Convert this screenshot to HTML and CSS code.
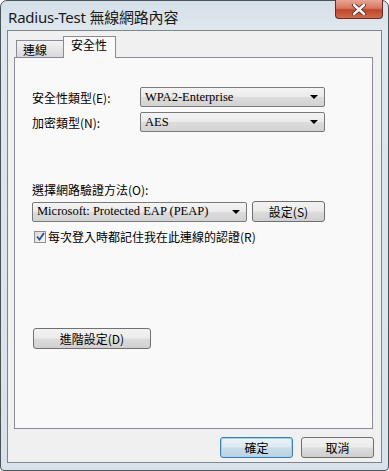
FILE: index.html
```html
<!DOCTYPE html>
<html lang="zh-Hant">
<head>
  <meta charset="UTF-8">
  <title>Radius-Test 無線網路內容</title>
  <link rel="stylesheet" href="styles.css">
</head>
<body>
  <div class="window">
    <div class="titlebar">
      <span class="title">Radius-Test 無線網路內容</span>
      <div class="close-btn">
        <svg width="16" height="11" viewBox="0 0 16 11">
          <path d="M3 1 L13 10 M13 1 L3 10" stroke="#5a2a20" stroke-width="4.2" stroke-linecap="round"/>
          <path d="M3 1 L13 10 M13 1 L3 10" stroke="#fff" stroke-width="2.4" stroke-linecap="round"/>
        </svg>
      </div>
    </div>

    <div class="client">
      <div class="tabs">
        <div class="tab">連線</div>
        <div class="tab active">安全性</div>
      </div>

      <div class="panel">
        <div class="row first">
          <span class="label">安全性類型(E):</span>
          <div class="combo wide"><span>WPA2-Enterprise</span><i class="arrow"></i></div>
        </div>
        <div class="row">
          <span class="label">加密類型(N):</span>
          <div class="combo wide"><span>AES</span><i class="arrow"></i></div>
        </div>

        <div class="method-label">選擇網路驗證方法(O):</div>
        <div class="method-row">
          <div class="combo method"><span>Microsoft: Protected EAP (PEAP)</span><i class="arrow"></i></div>
          <div class="btn settings">設定(S)</div>
        </div>
        <div class="check-row">
          <span class="checkbox">
            <svg width="9" height="9" viewBox="0 0 9 9">
              <path d="M1 4.5 L3.5 7.5 L8 1" fill="none" stroke="#2b4f9e" stroke-width="1.8"/>
            </svg>
          </span>
          <span>每次登入時都記住我在此連線的認證(R)</span>
        </div>

        <div class="btn advanced">進階設定(D)</div>
      </div>

      <div class="footer">
        <div class="btn default">確定</div>
        <div class="btn">取消</div>
      </div>
    </div>
  </div>
</body>
</html>
```

FILE: styles.css
```css
body {
  margin: 0;
  background: #fff;
}

.window {
  width: 387px;
  height: 469px;
  border: 1px solid #4a525a;
  border-radius: 7px 7px 4px 4px;
  background: linear-gradient(to bottom, #d6e0e9 0px, #dfe7ee 30px, #d9e2ea 100%);
  display: flex;
  flex-direction: column;
  font-family: "Liberation Serif", "Noto Sans CJK TC", serif;
  font-size: 12px;
  color: #000;
}

.titlebar {
  height: 29px;
  display: flex;
  align-items: flex-start;
  position: relative;
}

.title {
  font-family: "Noto Sans", "Noto Sans CJK TC", sans-serif;
  font-size: 15px;
  color: #1a1a1a;
  margin: 5px 0 0 7px;
  letter-spacing: -0.2px;
}

.close-btn {
  position: absolute;
  right: 5px;
  top: -1px;
  width: 46px;
  height: 18px;
  border: 1px solid #6a2a20;
  border-top: none;
  border-radius: 0 0 4px 4px;
  background: linear-gradient(to bottom, #e8a692 0%, #d77860 45%, #c2452a 55%, #d26a4a 100%);
  display: flex;
  align-items: center;
  justify-content: center;
}

.client {
  margin: 0 6px 7px 6px;
  flex: 1;
  border: 1px solid #7d858d;
  background: #f0f0f0;
  padding: 5px 8px 0 6px;
  display: flex;
  flex-direction: column;
}

.tabs {
  display: flex;
  align-items: flex-end;
  height: 21px;
  padding-left: 2px;
  position: relative;
  z-index: 1;
}

.tab {
  height: 16px;
  padding: 0 0 0 6px;
  width: 40px;
  border: 1px solid #898c95;
  border-bottom: none;
  border-right: none;
  background: linear-gradient(to bottom, #f3f3f3, #d9d9d9);
  line-height: 18px;
  font-family: "Noto Sans CJK TC", sans-serif;
}

.tab.active {
  height: 21px;
  width: 44px;
  padding-left: 7px;
  border-right: 1px solid #898c95;
  background: #f9f9f9;
  line-height: 16px;
  margin-bottom: -1px;
}

.panel {
  height: 370px;
  border: 1px solid #898c95;
  background: #f9f9f9;
  padding: 0 0 0 17px;
  font-family: "Noto Sans CJK TC", sans-serif;
}

.row {
  display: flex;
  align-items: center;
  margin-top: 5px;
}

.row.first {
  margin-top: 29px;
}

.label {
  width: 108px;
}

.combo {
  height: 18px;
  border: 1px solid #7a7a7a;
  border-radius: 2px;
  background: linear-gradient(to bottom, #f4f4f4 0%, #eaeaea 50%, #dcdcdc 51%, #d2d2d2 100%);
  display: flex;
  align-items: center;
  padding-left: 4px;
  font-family: "Liberation Serif", "Noto Sans CJK TC", serif;
  font-size: 12.5px;
  position: relative;
  box-sizing: content-box;
}

.combo span {
  flex: 1;
}

.arrow {
  width: 0;
  height: 0;
  border-left: 4px solid transparent;
  border-right: 4px solid transparent;
  border-top: 4px solid #000;
  margin-right: 6px;
}

.combo.wide {
  width: 179px;
}

.method-label {
  margin-top: 51px;
  line-height: 14px;
}

.method-row {
  display: flex;
  align-items: center;
  margin-top: 4px;
}

.combo.method {
  width: 209px;
}

.btn {
  height: 19px;
  border: 1px solid #707070;
  border-radius: 3px;
  background: linear-gradient(to bottom, #f2f2f2 0%, #ebebeb 48%, #dddddd 52%, #cfcfcf 100%);
  display: flex;
  align-items: center;
  justify-content: center;
  font-family: "Noto Sans CJK TC", sans-serif;
  font-size: 12px;
}

.btn.settings {
  width: 71px;
  margin-left: 5px;
}

.check-row {
  display: flex;
  align-items: center;
  margin-top: 6px;
  padding-left: 2px;
}

.checkbox {
  border: 1px solid #8f8f8f;
  background: linear-gradient(to bottom right, #dcdcdc, #f6f6f6);
  display: flex;
  align-items: center;
  justify-content: center;
  margin-right: 2px;
  box-sizing: border-box;
  width: 12px;
  height: 12px;
}

.btn.advanced {
  width: 116px;
  margin-top: 83px;
  margin-left: 1px;
}

.footer {
  display: flex;
  justify-content: flex-end;
  gap: 8px;
  margin-top: 8px;
  margin-right: -1px;
}

.footer .btn {
  width: 71px;
}

.btn.default {
  border-color: #3c7fb1;
  background: linear-gradient(to bottom, #eaf3f9 0%, #dde9f1 48%, #c9dbe7 52%, #bed3e1 100%);
  box-shadow: inset 0 0 0 1px #9fd3f0;
}
```
